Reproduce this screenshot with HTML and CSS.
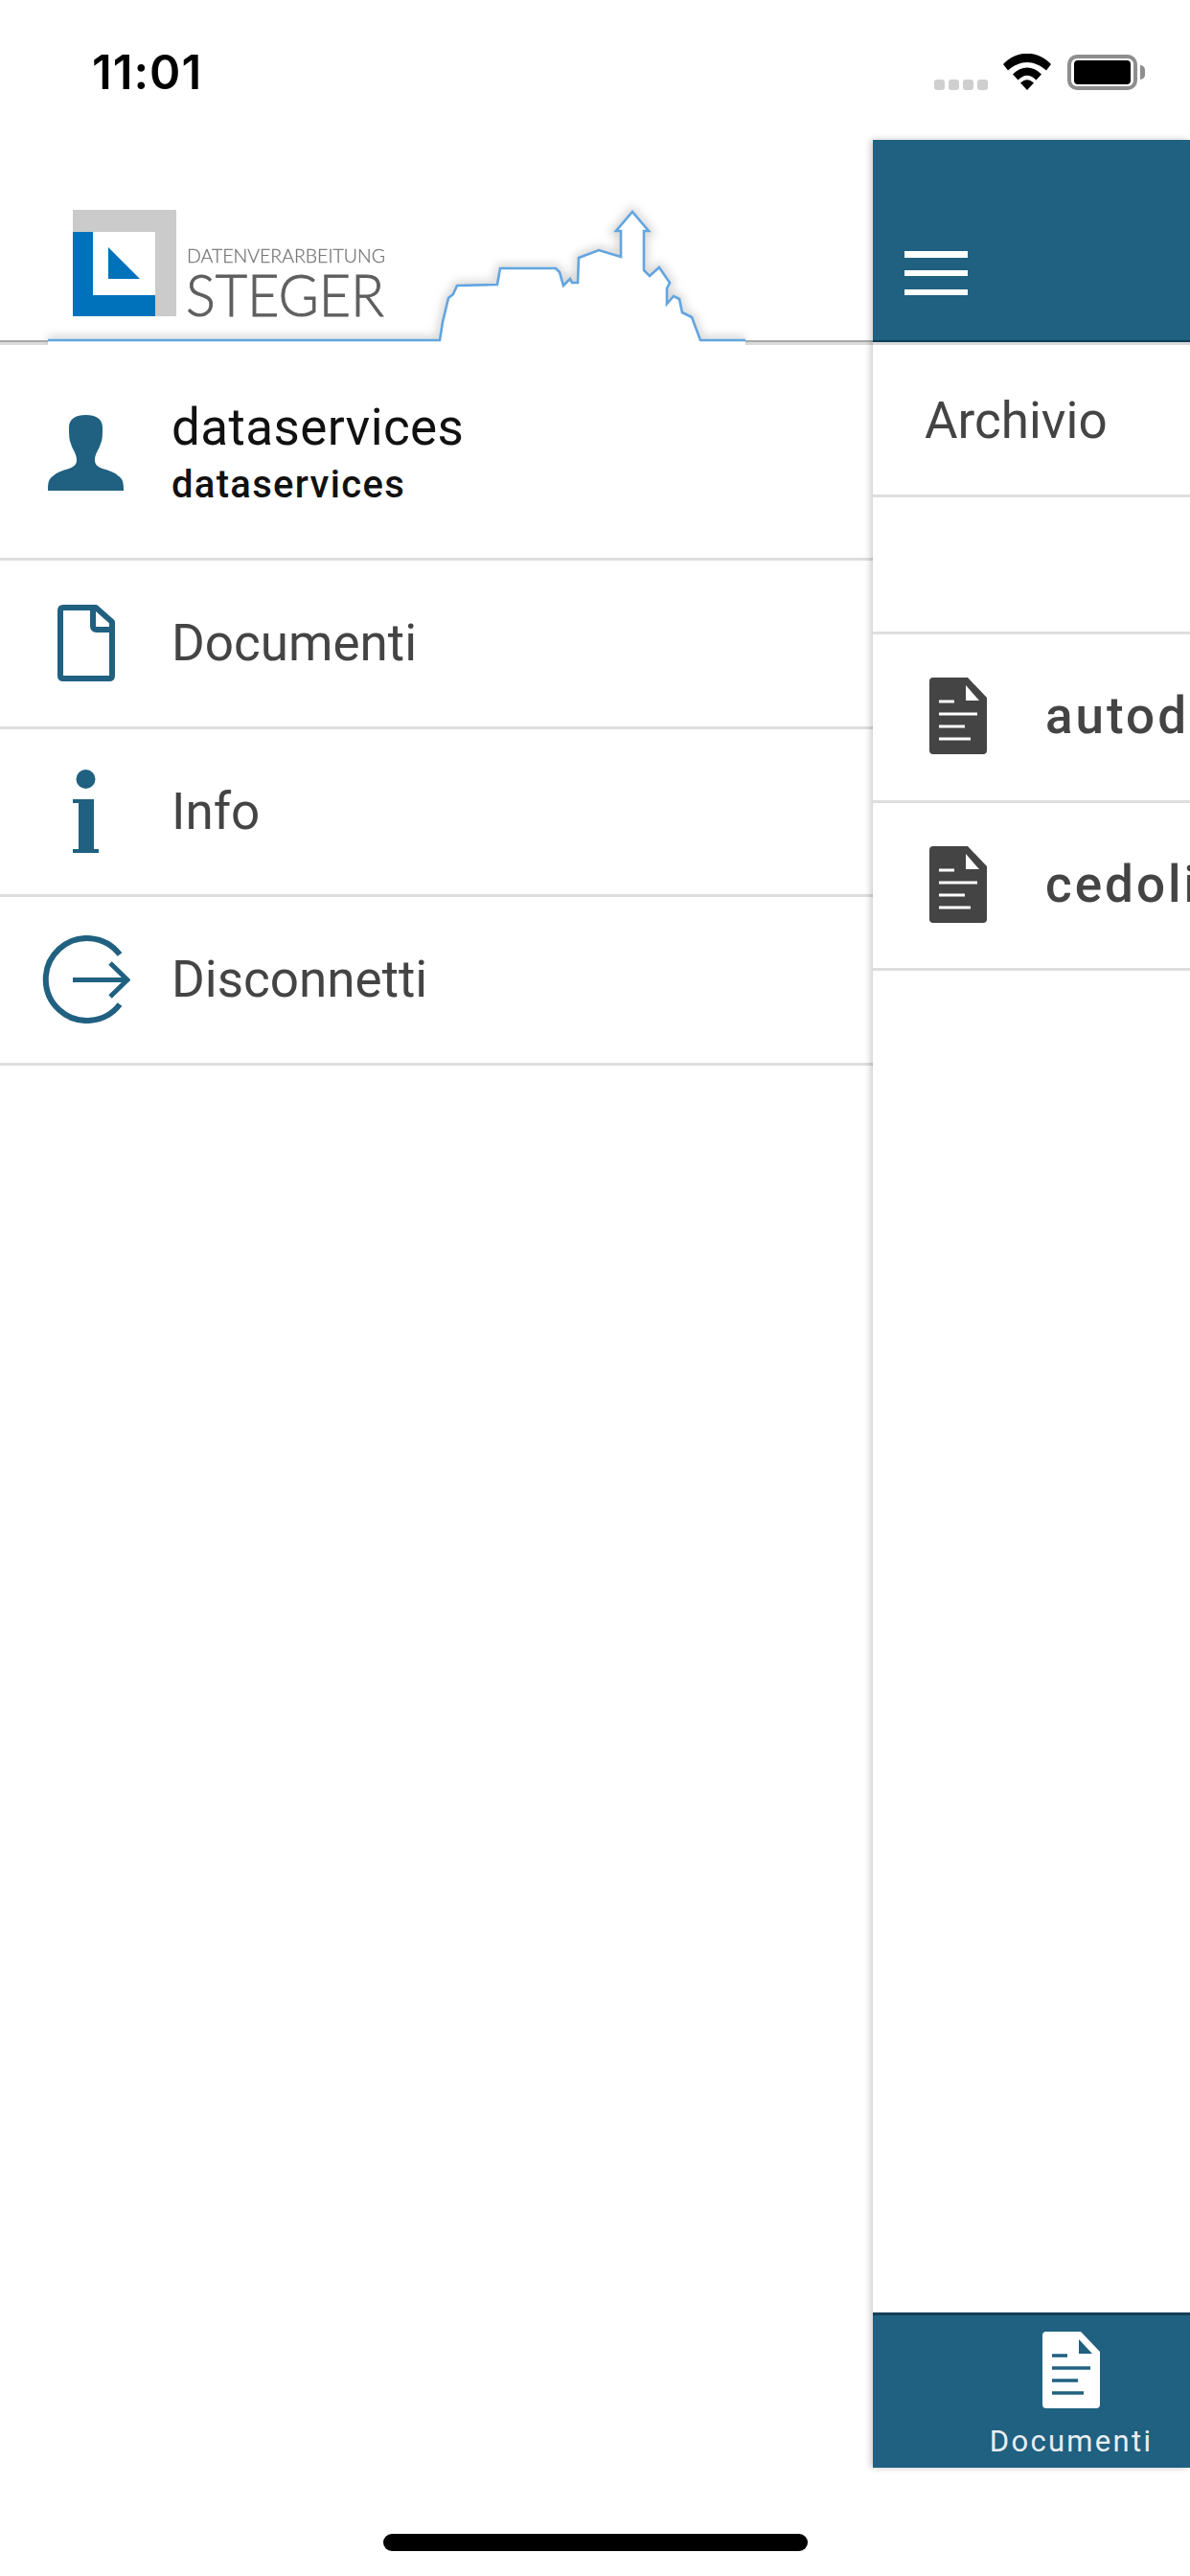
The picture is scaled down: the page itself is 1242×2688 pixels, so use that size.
FILE: index.html
```html
<!DOCTYPE html>
<html lang="it">
<head>
<meta charset="utf-8">
<title>Documenti</title>
<link rel="stylesheet" href="styles.css">
</head>
<body>
<div class="screen">
  <header class="status">
    <span class="time">11:01</span>
    <div class="status-icons">
      <span class="signal"><i></i><i></i><i></i><i></i></span>
      <svg class="wifi" viewBox="0 0 50 38"><path d="M0 11 C14 -4 36 -4 50 11 L45 17.500 C32 6 18 6 5 17.500 Z M10 21.500 C19 12 31 12 40 21.500 L34.500 27.500 C28 21 22 21 15.500 27.500 Z M18 30.500 C23 26 27 26 32 30.500 L25 38 Z"/></svg>
      <span class="battery"><span class="battery-fill"></span></span>
      <span class="battery-tip"></span>
    </div>
  </header>
  <div class="panes">
    <aside class="drawer">
      <div class="brand">
        <svg class="brand-art" viewBox="0 0 911 214" width="911" height="214">
          <defs>
            <filter id="glow" x="-5%" y="-20%" width="110%" height="140%"><feGaussianBlur stdDeviation="5"/></filter>
            <filter id="soft" x="-5%" y="-20%" width="110%" height="140%"><feGaussianBlur stdDeviation="0.6"/></filter>
          </defs>
          <rect class="brand-rule" x="0" y="209" width="911" height="5"/>
          <rect class="brand-rule-dark" x="0" y="209" width="911" height="2"/>
          <rect class="brand-plate" x="50" y="140" width="728" height="74"/>
          <path class="brand-shadow" filter="url(#glow)" d="M50 209 L459 209 L462 190 L468 165 L473 161 L477 152 L519 151 L522 134 L580 134 L584 138 L588 152 L595 145 L597 149 L603 149 L604 123 L625 115 L648 122 L648 95 L643 95 L660 75 L677 95 L672 95 L672 136 L678 142 L688 133 L699 149 L696 155 L696 171 L703 163 L709 166 L712 180 L722 185 L731 209 L778 209"/>
          <path class="brand-fill" d="M50 214 L50 209 L459 209 L462 190 L468 165 L473 161 L477 152 L519 151 L522 134 L580 134 L584 138 L588 152 L595 145 L597 149 L603 149 L604 123 L625 115 L648 122 L648 95 L643 95 L660 75 L677 95 L672 95 L672 136 L678 142 L688 133 L699 149 L696 155 L696 171 L703 163 L709 166 L712 180 L722 185 L731 209 L778 209 L778 214 Z"/>
          <path class="brand-line" filter="url(#soft)" d="M50 209 L459 209 L462 190 L468 165 L473 161 L477 152 L519 151 L522 134 L580 134 L584 138 L588 152 L595 145 L597 149 L603 149 L604 123 L625 115 L648 122 L648 95 L643 95 L660 75 L677 95 L672 95 L672 136 L678 142 L688 133 L699 149 L696 155 L696 171 L703 163 L709 166 L712 180 L722 185 L731 209 L778 209"/>
          <g filter="url(#soft)">
            <rect class="logo-grey" x="76" y="73" width="108" height="111"/>
            <rect class="logo-white" x="97" y="96" width="65" height="66"/>
            <path class="logo-blue" d="M76 96 H97 V162 H162 V184 H76 Z M113 112 L146 145 H113 Z"/>
            <text class="logo-small" x="195" y="128" textLength="207" lengthAdjust="spacingAndGlyphs">DATENVERARBEITUNG</text>
            <text class="logo-big" x="194" y="184" textLength="207" lengthAdjust="spacingAndGlyphs">STEGER</text>
          </g>
        </svg>
      </div>
      <div class="user-row">
        <svg class="user-icon" viewBox="0 0 79 79"><path d="M39.500 0 C50 0 57 4 57 13 C57 20 57 26 55 30 C53 37 49 40 49 47 C49 52 52 54 57 56 C64 58 70 60 74 64 C78 67 79 70 79 79 H0 C0 70 1 67 5 64 C9 60 15 58 22 56 C27 54 30 52 30 47 C30 40 26 37 24 30 C22 26 22 20 22 13 C22 4 29 0 39.500 0 Z"/></svg>
        <div class="user-text">
          <div class="user-name">dataservices</div>
          <div class="user-sub">dataservices</div>
        </div>
      </div>
      <nav class="menu">
        <a class="menu-row">
          <span class="icon-slot"><svg class="icon-doc" viewBox="0 0 60 80"><path class="stroke-thick" d="M6 3 H40 L57 18 V74 Q57 77 54 77 H6 Q3 77 3 74 V6 Q3 3 6 3 Z M37 3 V22 Q37 26 41 26 H57"/></svg></span>
          <span class="menu-label">Documenti</span>
        </a>
        <a class="menu-row">
          <span class="icon-slot"><svg class="icon-info" viewBox="0 0 27 87"><circle cx="13.500" cy="10" r="10"/><path d="M0 31 H22 V83 H27 V87 H0 V83 H6 V35 H0 Z"/></svg></span>
          <span class="menu-label">Info</span>
        </a>
        <a class="menu-row">
          <span class="icon-slot"><svg class="icon-exit" viewBox="0 0 93 92"><path class="stroke-thin" d="M82 20 A43 43 0 1 0 82 72"/><path class="stroke-arrow" d="M33 46.500 H90 M72 29 L90 46.500 L72 64"/></svg></span>
          <span class="menu-label">Disconnetti</span>
        </a>
      </nav>
    </aside>
    <main class="content">
      <div class="topbar">
        <button class="burger"><i></i><i></i><i></i></button>
      </div>
      <div class="crumb">Archivio</div>
      <div class="spacer-row"></div>
      <div class="doc-row">
        <svg class="doc-icon" viewBox="0 0 60 80"><path class="doc-body" d="M4 0 H40 L60 21 V76 Q60 80 56 80 H4 Q0 80 0 76 V4 Q0 0 4 0 Z"/><path class="doc-fold" d="M38 8 L52 24 H38 Z"/><path class="doc-lines" d="M10 25 H26 M10 38 H50 M10 51 H37 M10 64 H43"/></svg>
        <span class="doc-name">autod</span>
      </div>
      <div class="doc-row">
        <svg class="doc-icon" viewBox="0 0 60 80"><path class="doc-body" d="M4 0 H40 L60 21 V76 Q60 80 56 80 H4 Q0 80 0 76 V4 Q0 0 4 0 Z"/><path class="doc-fold" d="M38 8 L52 24 H38 Z"/><path class="doc-lines" d="M10 25 H26 M10 38 H50 M10 51 H37 M10 64 H43"/></svg>
        <span class="doc-name">cedolini</span>
      </div>
      <div class="grow"></div>
      <footer class="tabbar">
        <div class="tab">
          <svg class="tab-icon" viewBox="0 0 60 80"><path class="tab-body" d="M4 0 H40 L60 21 V76 Q60 80 56 80 H4 Q0 80 0 76 V4 Q0 0 4 0 Z"/><path class="tab-fold" d="M38 8 L52 23 H38 Z"/><path class="tab-lines" d="M10 25 H26 M10 38 H50 M10 51 H37 M10 64 H43"/></svg>
          <span class="tab-label">Documenti</span>
        </div>
      </footer>
    </main>
  </div>
  <div class="home-zone"><span class="home-bar"></span></div>
</div>
</body>
</html>
```
FILE: styles.css
```css
* { box-sizing: border-box; }
html, body { margin: 0; padding: 0; background: #fff; }
.screen { width: 1242px; height: 2688px; display: flex; flex-direction: column; overflow: hidden; font-family: Roboto, sans-serif; }

.status { height: 146px; flex: none; display: flex; justify-content: space-between; align-items: flex-start; padding: 51px 47px 0 96px; }
.time { font: 600 49px/50px Inter, "Liberation Sans", sans-serif; color: #000; letter-spacing: 1px; }
.status-icons { display: flex; align-items: flex-end; height: 38px; margin-top: 5px; }
.signal { display: flex; gap: 4px; margin-right: 16px; }
.signal i { width: 11px; height: 11px; border-radius: 3px; background: #cfcfcf; }
.wifi { width: 50px; height: 38px; margin-right: 17px; fill: #000; }
.battery { width: 73px; height: 37px; border: 4px solid #8e8e8e; border-radius: 10px; padding: 2px 3px; display: flex; }
.battery-fill { flex: 1; background: #000; border-radius: 4px; }
.battery-tip { width: 5px; height: 15px; background: #8e8e8e; margin: 0 0 11px 3px; border-radius: 0 5px 5px 0; }

.panes { flex: none; height: 2429px; display: flex; }
.drawer { width: 911px; flex: none; display: flex; flex-direction: column; }
.brand { height: 214px; flex: none; }
.brand-art { display: block; }
.brand-rule { fill: #dcdcdc; }
.brand-rule-dark { fill: #ababab; }
.brand-plate { fill: #fff; }
.brand-shadow { fill: none; stroke: #8f8f8f; stroke-width: 8; opacity: .4; }
.brand-fill { fill: #fff; }
.brand-line { fill: none; stroke: #62a5e0; stroke-width: 2.6; }
.logo-grey { fill: #cbcbcb; }
.logo-white { fill: #fff; }
.logo-blue { fill: #0072bc; fill-rule: evenodd; }
.logo-small { font: 300 19px Lato, "Liberation Sans", sans-serif; fill: #777; stroke: #777; stroke-width: .3; }
.logo-big { font: 300 62px Lato, "Liberation Sans", sans-serif; fill: #5e5e5e; stroke: #5e5e5e; stroke-width: .9; }

.user-row { height: 225px; flex: none; display: flex; align-items: flex-start; border-bottom: 3px solid #dedede; padding-top: 55px; }
.user-icon { width: 79px; height: 79px; margin: 18px 0 0 50px; flex: none; fill: #206080; }
.user-text { margin-left: 50px; }
.user-name { font-size: 53px; line-height: 62px; color: #111; letter-spacing: .4px; }
.user-sub { font-size: 40px; line-height: 58px; font-weight: 500; color: #111; letter-spacing: 1.3px; }
.menu { display: flex; flex-direction: column; }
.menu-row { height: 175.5px; display: flex; align-items: center; border-bottom: 3px solid #dedede; }
.icon-slot { width: 179px; flex: none; display: flex; justify-content: center; }
.icon-doc { width: 60px; height: 80px; }
.icon-info { width: 27px; height: 87px; fill: #206080; }
.icon-exit { width: 93px; height: 92px; }
.stroke-thick { fill: none; stroke: #206080; stroke-width: 6; stroke-linejoin: round; }
.stroke-thin { fill: none; stroke: #206080; stroke-width: 6; }
.stroke-arrow { fill: none; stroke: #206080; stroke-width: 5; }
.menu-label { font-size: 53px; color: #444; }

.content { flex: 1; min-width: 0; display: flex; flex-direction: column; overflow: hidden; box-shadow: -2px 0 7px rgba(0,0,0,.22); position: relative; background: #fff; }
.topbar { height: 211px; flex: none; background: #206080; border-bottom: 2px solid #0e3d55; display: flex; align-items: flex-end; box-shadow: 0 3px 0 #dadada; padding: 0 0 47px 33px; position: relative; }
.burger { width: 66px; height: 46px; padding: 0; border: 0; background: none; display: flex; flex-direction: column; justify-content: space-between; }
.burger i { display: block; height: 6.5px; background: #fff; }
.crumb { height: 162px; flex: none; padding: 51px 0 0 54px; font-size: 53px; line-height: 62px; color: #444; border-bottom: 3px solid #dedede; }
.spacer-row { height: 143px; flex: none; border-bottom: 3px solid #dedede; }
.doc-row { height: 175.5px; flex: none; display: flex; align-items: center; border-bottom: 3px solid #dedede; padding: 0 0 2px 59px; white-space: nowrap; overflow: hidden; }
.doc-icon { width: 60px; height: 80px; flex: none; }
.doc-body { fill: #444; }
.doc-fold { fill: #fff; }
.doc-lines { fill: none; stroke: #fff; stroke-width: 3; }
.doc-name { margin-left: 61px; font-size: 53px; font-weight: 500; letter-spacing: 3px; color: #444; }
.grow { flex: 1; }
.tabbar { height: 162px; flex: none; background: #206080; border-top: 3px solid #123f58; display: flex; padding-top: 17px; }
.tab { width: 414px; flex: none; display: flex; flex-direction: column; align-items: center; }
.tab-icon { width: 60px; height: 80px; }
.tab-body { fill: #fff; }
.tab-fold { fill: #206080; }
.tab-lines { fill: none; stroke: #206080; stroke-width: 3.5; }
.tab-label { font-size: 31px; line-height: 36px; letter-spacing: 2.3px; color: #e8eef2; margin-top: 17px; }

.home-zone { flex: 1; display: flex; justify-content: center; padding-top: 69px; }
.home-bar { width: 443px; height: 17.5px; border-radius: 9px; background: #000; }
```
